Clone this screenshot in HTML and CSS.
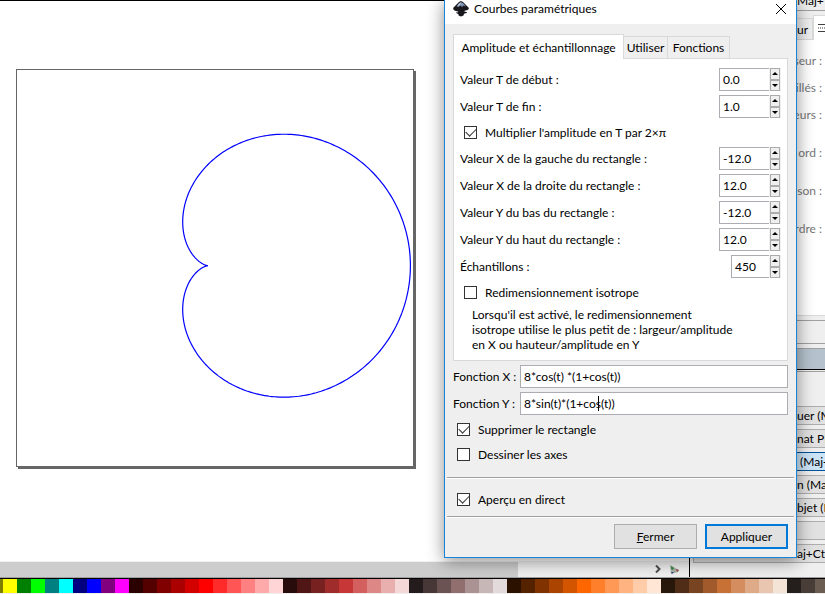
FILE: index.html
```
<!DOCTYPE html>
<html lang="fr">
<head>
  <meta charset="utf-8">
  <title>Courbes paramétriques</title>
  <link rel="stylesheet" href="styles.css">
</head>
<body>
<div class="workspace">
  <div class="canvas-area">
    <div class="canvas">
      <div class="page">
        <svg viewBox="0 0 396 396"><path id="curve"></path></svg>
      </div>
    </div>
    <div class="scroll-row">
      <div class="scroll-track"><div class="scroll-thumb"></div></div>
      <svg class="scroll-arrow" viewBox="0 0 8 8"><path d="M2 0.5L5.5 4L2 7.500"></path></svg>
      <svg class="cms-icon" viewBox="0 0 9 9"><path fill="#a9b3a8" d="M0 0L9 5L8 7L1 9z"></path><path fill="#3a8a4a" d="M1 1L4 3L3 5L1 4z"></path><path fill="#a04048" d="M6 4L9 5L7 7z"></path><path fill="#44448c" d="M1 7L4 7L2 9z"></path></svg>
    </div>
  </div>

  <div class="dock">
    <div class="dock-title">Maj+</div>
    <div class="dock-tabs">
      <button type="button" class="dock-tab">ur</button>
      <button type="button" class="dock-tab dock-tab-active" aria-label="Style du contour">
        <svg viewBox="0 0 12 10"><path d="M0 1.500H12M0 8.500H12"></path><path stroke-dasharray="1 1" d="M0 5H12"></path></svg>
      </button>
    </div>
    <div class="dock-page">
      <p>seur :</p>
      <p>illés :</p>
      <p class="wide">eurs :</p>
      <p class="wide">ord :</p>
      <p class="wide">son :</p>
      <p>rdre :</p>
    </div>
    <div class="dock-bar"></div>
    <div class="dock-header"></div>
    <div class="dock-actions">
      <button type="button">uer (Maj</button>
      <button type="button">nat PNG</button>
      <button type="button" class="hot">&nbsp;(Maj+</button>
      <button type="button">n (Maj+</button>
      <button type="button">bjet (Maj</button>
      <button type="button" aria-label="Action"></button>
      <button type="button">aj+Ctrl</button>
    </div>
  </div>
</div>

<div class="palette" id="palette"></div>

<div class="dialog" role="dialog" aria-labelledby="dialog-title">
  <div class="titlebar">
    <svg class="logo" viewBox="0 0 16 16">
      <path fill="#18181c" d="M8 0L10 1L15.500 6.500Q16.500 8 14.500 9L11 10Q12 11 13.500 11L14 12L11.500 12.500Q10.500 13.500 10.500 14.500L8 15.500L5.500 14.500Q6 13 4 12.500L3 11.500L5 10.800L1.500 9.500Q-0.500 8 0.500 6.500L6 1z"></path>
      <path fill="#7e93b5" d="M8 1L10.500 2.500L13 5.500L10.500 4.500L9 6L7.500 4.500L5.500 6L3.500 5.500L6 2.200z"></path>
      <path fill="#e8edf5" d="M8 1.500L6 3L4.500 5L6.500 4z"></path>
      <path fill="#ffffff" d="M3 10.800L5.500 10.500L4.500 11.500zM12 10.500L14.500 10L13.500 11z"></path>
    </svg>
    <span class="title" id="dialog-title">Courbes paramétriques</span>
    <button type="button" class="close" aria-label="Close">
      <svg viewBox="0 0 10 10"><path d="M0 0L10 10M10 0L0 10"></path></svg>
    </button>
  </div>

  <div class="content">
    <div class="tabs">
      <button type="button" class="tab tab-active">Amplitude et échantillonnage</button>
      <button type="button" class="tab tab-use">Utiliser</button>
      <button type="button" class="tab tab-functions">Fonctions</button>
    </div>

    <div class="panel">
      <div class="row">
        <label for="t-start">Valeur T de début :</label>
        <div class="spin"><input type="text" id="t-start" value="0.0"><div class="steps"><button type="button" class="up" aria-label="Plus"></button><button type="button" class="down" aria-label="Moins"></button></div></div>
      </div>
      <div class="row">
        <label for="t-end">Valeur T de fin :</label>
        <div class="spin"><input type="text" id="t-end" value="1.0"><div class="steps"><button type="button" class="up" aria-label="Plus"></button><button type="button" class="down" aria-label="Moins"></button></div></div>
      </div>
      <label class="check"><input type="checkbox" checked>Multiplier l'amplitude en T par 2×π</label>
      <div class="row">
        <label for="x-left">Valeur X de la gauche du rectangle :</label>
        <div class="spin"><input type="text" id="x-left" value="-12.0"><div class="steps"><button type="button" class="up" aria-label="Plus"></button><button type="button" class="down" aria-label="Moins"></button></div></div>
      </div>
      <div class="row">
        <label for="x-right">Valeur X de la droite du rectangle :</label>
        <div class="spin"><input type="text" id="x-right" value="12.0"><div class="steps"><button type="button" class="up" aria-label="Plus"></button><button type="button" class="down" aria-label="Moins"></button></div></div>
      </div>
      <div class="row">
        <label for="y-bottom">Valeur Y du bas du rectangle :</label>
        <div class="spin"><input type="text" id="y-bottom" value="-12.0"><div class="steps"><button type="button" class="up" aria-label="Plus"></button><button type="button" class="down" aria-label="Moins"></button></div></div>
      </div>
      <div class="row">
        <label for="y-top">Valeur Y du haut du rectangle :</label>
        <div class="spin"><input type="text" id="y-top" value="12.0"><div class="steps"><button type="button" class="up" aria-label="Plus"></button><button type="button" class="down" aria-label="Moins"></button></div></div>
      </div>
      <div class="row">
        <label for="samples">Échantillons :</label>
        <div class="spin spin-small"><input type="text" id="samples" value="450"><div class="steps"><button type="button" class="up" aria-label="Plus"></button><button type="button" class="down" aria-label="Moins"></button></div></div>
      </div>
      <label class="check"><input type="checkbox">Redimensionnement isotrope</label>
      <p class="note">Lorsqu'il est activé, le redimensionnement<br>isotrope utilise le plus petit de : largeur/amplitude<br>en X ou hauteur/amplitude en Y</p>
    </div>

    <div class="function-row">
      <label for="fx">Fonction X :</label>
      <div class="entry"><input type="text" id="fx" value="8*cos(t) *(1+cos(t))"></div>
    </div>
    <div class="function-row">
      <label for="fy">Fonction Y :</label>
      <div class="entry"><input type="text" id="fy" value="8*sin(t)*(1+cos(t))"><span class="caret"></span></div>
    </div>
    <label class="check"><input type="checkbox" checked>Supprimer le rectangle</label>
    <label class="check"><input type="checkbox">Dessiner les axes</label>
  </div>

  <hr>
  <label class="check check-live"><input type="checkbox" checked>Aperçu en direct</label>
  <hr>
  <div class="buttons">
    <button type="button"><u>F</u>ermer</button>
    <button type="button" class="default">Appliquer</button>
  </div>
</div>

<script>
  const colors = [
    "808000", "ffff00", "008000", "00ff00", "008080", "00ffff", "000080", "0000ff", "800080", "ff00ff",
    "2b0000", "550000", "800000", "aa0000", "d40000", "ff0000", "ff2a2a", "ff5555", "ff8080", "ffaaaa", "ffd5d5",
    "280b0b", "501616", "782121", "a02c2c", "c83737", "d35f5f", "de8787", "e9afaf", "f4d7d7",
    "241c1c", "483737", "6c5353", "916f6f", "ac9393", "c8b7b7", "e3dbdb",
    "2b1100", "552200", "803300", "aa4400", "d45500", "ff6600", "ff7f2a", "ff9955", "ffb380", "ffccaa", "ffe6d5",
    "28170b", "502d16", "784421", "a05a2c", "c87137", "d38d5f", "deaa87", "e9c6af", "f4e3d7",
    "241f1c", "483e37", "6c5d53"
  ];
  const palette = document.getElementById("palette");
  for (const color of colors) {
    const swatch = document.createElement("button");
    swatch.type = "button";
    swatch.className = "swatch";
    swatch.setAttribute("aria-label", "#" + color);
    swatch.style.backgroundColor = "#" + color;
    palette.appendChild(swatch);
  }

  // x = 8cos(t)(1+cos(t)), y = 8sin(t)(1+cos(t))
  const samples = 450;
  const scale = 12.65;
  let d = "";
  for (let i = 0; i <= samples; i++) {
    const t = 2 * Math.PI * i / samples;
    const r = 8 * scale * (1 + Math.cos(t));
    const x = 191 + r * Math.cos(t);
    const y = 195.7 - r * Math.sin(t);
    d += (i === 0 ? "M" : "L") + x.toFixed(2) + " " + y.toFixed(2);
  }
  document.getElementById("curve").setAttribute("d", d + "Z");
</script>
</body>
</html>
```
FILE: styles.css
```
* {
  box-sizing: border-box;
}

body {
  margin: 0;
  height: 100vh;
  display: flex;
  flex-direction: column;
  overflow: hidden;
  position: relative;
  background-color: #efefef;
  font-family: Lato, "Open Sans", sans-serif;
  font-size: 12px;
  line-height: 15px;
  color: #000000;
}

button, input {
  font: inherit;
  color: inherit;
  margin: 0;
  padding: 0;
  border-radius: 0;
}

p {
  margin: 0;
}

/* drawing area */
.workspace {
  flex: 1;
  min-height: 0;
  display: flex;
  border-bottom: 1px solid #a0a0a0;
}

.canvas-area {
  flex: 1;
  display: flex;
  flex-direction: column;
  border-top: 1px solid #000000;
}

.canvas {
  flex: 1;
  padding: 68px 16px;
  background-color: #ffffff;
}

.page {
  width: 398px;
  border: 1px solid #666666;
  box-shadow: 2px 2px 0 #666666;
}

.page svg {
  display: block;
}

#curve {
  fill: none;
  stroke: #0000ff;
  stroke-width: 1.2;
}

.scroll-row {
  display: flex;
  align-items: center;
  height: 16px;
  padding-right: 10px;
  background-color: #f0f0f0;
}

.scroll-track {
  flex: 1;
}

.scroll-thumb {
  width: 518px;
  height: 15px;
  background-color: #cdcdcd;
}

.scroll-arrow {
  width: 8px;
  height: 8px;
  margin-right: 8px;
  fill: none;
  stroke: #505050;
  stroke-width: 2;
}

.cms-icon {
  width: 9px;
  height: 9px;
}

/* right dock */
.dock {
  width: 136px;
  border-left: 1px solid #000000;
  overflow: hidden;
  white-space: nowrap;
}

.dock-title {
  height: 11px;
  padding-left: 107px;
  line-height: 1px;
  border-bottom: 1px solid #a0a0a0;
}

.dock-tabs {
  display: flex;
  align-items: flex-end;
  height: 29px;
  padding-left: 80px;
}

.dock-tab {
  flex: none;
  width: 43px;
  height: 22px;
  padding-right: 4px;
  text-align: right;
  background-color: #efefef;
  border: 1px solid #d9d9d9;
}

.dock-tab-active {
  height: 25px;
  padding: 0 4px;
  text-align: left;
  background-color: #ffffff;
  border-bottom: none;
}

.dock-tab svg {
  width: 12px;
  height: 10px;
  stroke: #404040;
}

.dock-page {
  display: flex;
  flex-direction: column;
  height: 276px;
  padding: 13px 3px 0;
  gap: 12px;
  text-align: right;
  color: #777777;
  background-color: #ffffff;
  border-bottom: 1px solid #d9d9d9;
}

.dock-page .wide {
  margin-bottom: 11px;
}

.dock-bar {
  height: 24px;
  margin: 4px 0;
  border-top: 1px solid #a0a0a0;
  border-bottom: 1px solid #a0a0a0;
}

.dock-header {
  height: 22px;
  background-color: #b5c2cd;
  border-top: 1px solid #a0a0a0;
  border-bottom: 1px solid #000000;
}

.dock-actions {
  display: flex;
  flex-direction: column;
  gap: 4px;
  margin-top: 1px;
  padding: 34px 0 0 3px;
  border-top: 1px solid #a0a0a0;
}

.dock-actions button {
  height: 19px;
  padding-left: 103px;
  text-align: left;
  line-height: 17px;
  background-color: #e1e1e1;
  border: 1px solid #adadad;
  border-right: none;
}

.dock-actions .hot {
  background-color: #cce4f7;
  border-color: #005499;
}

/* colour palette */
.palette {
  display: flex;
  height: 16px;
  margin-left: -11px;
  padding-bottom: 1px;
  border-top: 1px solid #000000;
}

.swatch {
  flex: none;
  width: 14px;
  border: none;
}

/* dialog */
.dialog {
  position: absolute;
  top: 0;
  right: 28px;
  width: 353px;
  background-color: #efefef;
  border: 1px solid #1883d7;
  border-top: none;
  box-shadow: 0 3px 16px rgba(0, 0, 0, 0.45);
}

.titlebar {
  display: flex;
  height: 24px;
  padding: 0 10px 7px 8px;
  align-items: center;
  background-color: #ffffff;
}

.logo {
  width: 16px;
  height: 16px;
  margin-right: 5px;
}

.title {
  flex: 1;
}

.close {
  width: 10px;
  height: 10px;
  border: none;
  background: none;
}

.close svg {
  display: block;
  stroke: #000000;
  overflow: visible;
}

.content {
  display: flex;
  flex-direction: column;
  gap: 4px;
  padding: 10px 8px 12px;
}

.tabs {
  display: flex;
  align-items: flex-end;
  height: 24px;
  margin-bottom: -4px;
}

.tab {
  height: 22px;
  border: 1px solid #d9d9d9;
  border-bottom: none;
  border-left: none;
  background-color: #efefef;
  white-space: nowrap;
}

.tab-active {
  position: relative;
  width: 171px;
  height: 25px;
  margin-bottom: -1px;
  border-left: 1px solid #d9d9d9;
  background-color: #ffffff;
}

.tab-use {
  width: 44px;
}

.tab-functions {
  width: 62px;
}

.panel {
  display: flex;
  flex-direction: column;
  gap: 4px;
  padding: 9px 6px 8px;
  background-color: #ffffff;
  border: 1px solid #d9d9d9;
}

.row {
  display: flex;
  align-items: center;
  justify-content: space-between;
}

.spin {
  display: flex;
  width: 62px;
  height: 23px;
}

.spin-small {
  width: 50px;
}

.spin input {
  flex: 1;
  min-width: 0;
  padding-left: 3px;
  border: 1px solid #abadb3;
  border-right: none;
  background-color: #ffffff;
}

.steps {
  display: flex;
  flex-direction: column;
  width: 12px;
  padding: 0 1px;
  background-color: #f0f0f0;
}

.steps button {
  flex: 1;
  display: flex;
  align-items: center;
  justify-content: center;
  border: 1px solid #acacac;
  background-color: #efefef;
}

.steps button::before {
  content: "";
  border: 3px solid transparent;
}

.steps .up::before {
  border-top: none;
  border-bottom-color: #000000;
}

.steps .down::before {
  border-bottom: none;
  border-top-color: #000000;
}

.check {
  display: flex;
  align-items: center;
  height: 21px;
  padding-left: 4px;
}

.check input {
  appearance: none;
  display: grid;
  place-items: center;
  width: 13px;
  height: 13px;
  margin-right: 8px;
  border: 1px solid #333333;
  background-color: #ffffff;
}

.check input:checked::before {
  content: "";
  width: 9px;
  height: 5px;
  margin-bottom: 3px;
  border-left: 1px solid #333333;
  border-bottom: 1px solid #333333;
  transform: rotate(-45deg);
}

.note {
  padding-left: 12px;
  white-space: nowrap;
}

.function-row {
  display: flex;
  align-items: center;
  justify-content: space-between;
}

.entry {
  position: relative;
  width: 268px;
  height: 23px;
}

.entry input {
  width: 100%;
  height: 100%;
  padding-left: 3px;
  border: 1px solid #abadb3;
  background-color: #ffffff;
}

.caret {
  position: absolute;
  left: 78px;
  top: 4px;
  width: 1px;
  height: 15px;
  background-color: #000000;
}

hr {
  height: 2px;
  margin: 0 2px;
  border: none;
  border-top: 1px solid #a0a0a0;
  background-color: #ffffff;
}

.check-live {
  margin: 10px 8px 6px;
}

.buttons {
  display: flex;
  justify-content: flex-end;
  gap: 8px;
  padding: 6px 8px 8px;
}

.buttons button {
  width: 83px;
  height: 25px;
  background-color: #e1e1e1;
  border: 1px solid #adadad;
}

.buttons .default {
  border: 2px solid #0078d7;
}
```
